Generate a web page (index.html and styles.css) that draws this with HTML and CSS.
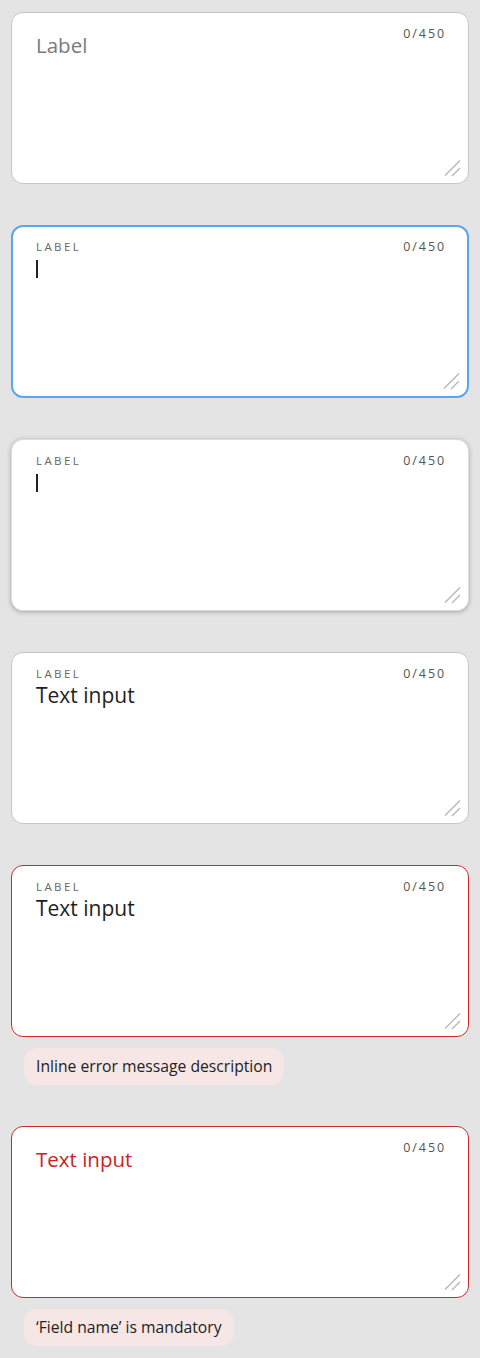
FILE: index.html
```html
<!DOCTYPE html>
<html lang="en">
<head>
<meta charset="utf-8">
<title>Text areas</title>
<link rel="stylesheet" href="styles.css">
</head>
<body>
<main class="page">
  <div class="group">
    <div class="field">
      <div class="head"><span class="label"></span><span class="count">0/450</span></div>
      <div class="placeholder">Label</div>
      <svg class="grip" width="18" height="18" viewBox="0 0 18 18"><path d="M1 16.5 L16 1.5 M8 17 L16 9" stroke="#b4b4b4" stroke-width="1.2" fill="none"/></svg>
    </div>
  </div>

  <div class="group">
    <div class="field focus">
      <div class="head"><span class="label">LABEL</span><span class="count">0/450</span></div>
      <div class="value"><span class="caret"></span></div>
      <svg class="grip" width="18" height="18" viewBox="0 0 18 18"><path d="M1 16.5 L16 1.5 M8 17 L16 9" stroke="#b4b4b4" stroke-width="1.2" fill="none"/></svg>
    </div>
  </div>

  <div class="group">
    <div class="field raised">
      <div class="head"><span class="label">LABEL</span><span class="count">0/450</span></div>
      <div class="value"><span class="caret"></span></div>
      <svg class="grip" width="18" height="18" viewBox="0 0 18 18"><path d="M1 16.5 L16 1.5 M8 17 L16 9" stroke="#b4b4b4" stroke-width="1.2" fill="none"/></svg>
    </div>
  </div>

  <div class="group">
    <div class="field">
      <div class="head"><span class="label">LABEL</span><span class="count">0/450</span></div>
      <div class="value">Text input</div>
      <svg class="grip" width="18" height="18" viewBox="0 0 18 18"><path d="M1 16.5 L16 1.5 M8 17 L16 9" stroke="#b4b4b4" stroke-width="1.2" fill="none"/></svg>
    </div>
  </div>

  <div class="group">
    <div class="field error">
      <div class="head"><span class="label">LABEL</span><span class="count">0/450</span></div>
      <div class="value">Text input</div>
      <svg class="grip" width="18" height="18" viewBox="0 0 18 18"><path d="M1 16.5 L16 1.5 M8 17 L16 9" stroke="#b4b4b4" stroke-width="1.2" fill="none"/></svg>
    </div>
    <div class="msg">Inline error message description</div>
  </div>

  <div class="group">
    <div class="field error">
      <div class="head"><span class="label"></span><span class="count">0/450</span></div>
      <div class="placeholder red">Text input</div>
      <svg class="grip" width="18" height="18" viewBox="0 0 18 18"><path d="M1 16.5 L16 1.5 M8 17 L16 9" stroke="#b4b4b4" stroke-width="1.2" fill="none"/></svg>
    </div>
    <div class="msg">‘Field name’ is mandatory</div>
  </div>
</main>
</body>
</html>
```

FILE: styles.css
```css
html, body {
  margin: 0;
  padding: 0;
  background: #e4e4e4;
}
body {
  font-family: "Open Sans", "Lato", sans-serif;
  color: #222;
}
.page {
  display: flex;
  flex-direction: column;
  gap: 41px;
  padding: 12px 11px 12px 11px;
  box-sizing: border-box;
  width: 480px;
  min-height: 1358px;
}
.group {
  display: flex;
  flex-direction: column;
  gap: 11px;
  align-items: flex-start;
}
.field {
  position: relative;
  box-sizing: border-box;
  width: 458px;
  height: 172px;
  background: #fff;
  border: 1px solid #c6c6c6;
  border-radius: 12px;
  padding: 12px 22px 0 24px;
}
.field.focus {
  border: 2px solid #5aa7ef;
  padding: 11px 21px 0 23px;
  height: 173px;
}
.field.raised {
  border-color: #dcdcdc;
  box-shadow: 0 1px 5px rgba(0, 0, 0, 0.28);
}
.field.error {
  border-color: #cc2a2a;
}
.head {
  display: flex;
  justify-content: space-between;
  align-items: flex-start;
  height: 18px;
}
.label {
  font-size: 11.5px;
  letter-spacing: 2.4px;
  color: #666;
  line-height: 18px;
}
.count {
  font-size: 12.5px;
  letter-spacing: 1.9px;
  color: #555;
  line-height: 18px;
}
.placeholder {
  font-size: 20.5px;
  line-height: 26px;
  color: #7a7a7a;
  margin-top: -11px;
}
.placeholder.red {
  color: #c82424;
}
.value {
  font-size: 21px;
  line-height: 26px;
  color: #1e1e1e;
  height: 26px;
  margin-top: -1px;
}
.caret {
  display: inline-block;
  width: 2px;
  height: 18px;
  background: #222;
  vertical-align: -2px;
}
.grip {
  position: absolute;
  right: 6px;
  bottom: 6px;
}
.msg {
  margin-left: 13px;
  background: #f6e6e6;
  border-radius: 13px;
  padding: 0 12px;
  height: 37px;
  line-height: 37px;
  font-size: 15.7px;
  color: #222;
}
```
